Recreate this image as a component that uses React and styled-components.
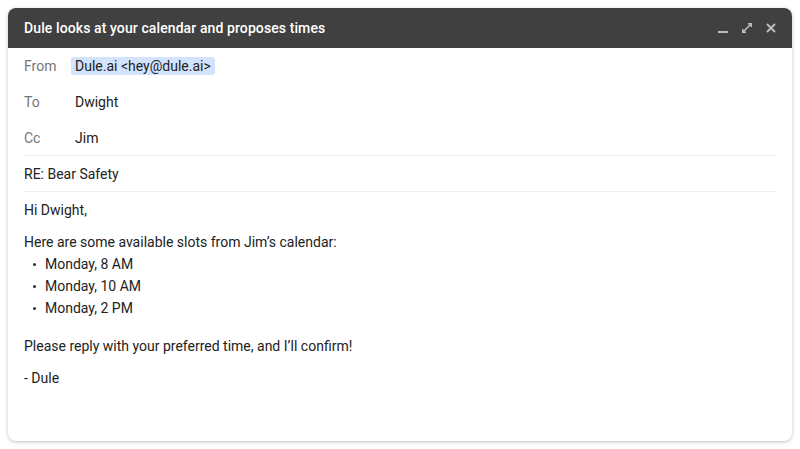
import React from "react";
import styled, { createGlobalStyle } from "styled-components";

const Global = createGlobalStyle`
  html, body { margin: 0; padding: 0; background: #ffffff; }
  body { font-family: Roboto, "Liberation Sans", Arial, sans-serif; }
  * { box-sizing: border-box; }
`;

const Page = styled.div`
  width: 800px;
  height: 449px;
  padding: 8px;
`;

const Card = styled.div`
  height: 433px;
  border-radius: 8px;
  background: #fff;
  box-shadow: 0 1px 3px rgba(0,0,0,0.18), 0 1px 6px rgba(0,0,0,0.08);
  overflow: hidden;
  display: flex;
  flex-direction: column;
`;

const Header = styled.div`
  height: 40px;
  background: #404040;
  display: flex;
  align-items: center;
  justify-content: space-between;
  padding: 0 16px 0 16px;
`;

const Title = styled.div`
  color: #fff;
  font-size: 14px;
  font-weight: 500;
  letter-spacing: 0.1px;
`;

const Controls = styled.div`
  display: flex;
  align-items: center;
  gap: 14px;
`;

const IconBtn = styled.span`
  width: 10px;
  height: 10px;
  display: inline-flex;
  align-items: center;
  justify-content: center;
  color: #bdbdbd;
`;

const Body = styled.div`
  padding: 0 16px;
  display: flex;
  flex-direction: column;
`;

const FieldRow = styled.div`
  height: 36px;
  display: flex;
  align-items: center;
  font-size: 14px;
  border-bottom: ${(p) => (p.$divider ? "1px solid #efefef" : "none")};
`;

const Label = styled.span`
  width: 51px;
  color: #777;
`;

const Value = styled.span`
  color: #222;
  ${(p) =>
    p.$chip &&
    `
    background: #d3e3fd;
    border-radius: 3px;
    padding: 1px 4px;
    margin-left: -4px;
  `}
`;

const Subject = styled.div`
  height: 36px;
  display: flex;
  align-items: center;
  font-size: 14px;
  color: #222;
  border-bottom: 1px solid #efefef;
`;

const Message = styled.div`
  padding-top: 7px;
  font-size: 14px;
  color: #222;
  line-height: 22px;
`;

const Para = styled.p`
  margin: 0 0 ${(p) => p.$gap ?? 10}px 0;
`;

const List = styled.ul`
  margin: 0 0 16px 0;
  padding: 0;
  list-style: none;
`;

const Item = styled.li`
  display: flex;
  align-items: center;
  &::before {
    content: "";
    width: 3px;
    height: 3px;
    border-radius: 50%;
    background: #333;
    margin: 0 9px 0 9px;
    flex: none;
  }
`;

const Minimize = () => (
  <svg width="10" height="10" viewBox="0 0 10 10">
    <rect x="0" y="8" width="10" height="2" fill="currentColor" />
  </svg>
);

const Expand = () => (
  <svg width="10" height="10" viewBox="0 0 10 10" fill="none">
    <path d="M6 0.8h3.2v3.2" stroke="currentColor" strokeWidth="1.6" />
    <path d="M4 9.2H0.8V6" stroke="currentColor" strokeWidth="1.6" />
    <path d="M9 1L1 9" stroke="currentColor" strokeWidth="1.6" />
  </svg>
);

const Close = () => (
  <svg width="10" height="10" viewBox="0 0 10 10" fill="none">
    <path d="M1 1l8 8M9 1l-8 8" stroke="currentColor" strokeWidth="2" />
  </svg>
);

export default function App() {
  return (
    <>
      <Global />
      <Page>
        <Card>
          <Header>
            <Title>Dule looks at your calendar and proposes times</Title>
            <Controls>
              <IconBtn><Minimize /></IconBtn>
              <IconBtn><Expand /></IconBtn>
              <IconBtn><Close /></IconBtn>
            </Controls>
          </Header>
          <Body>
            <FieldRow>
              <Label>From</Label>
              <Value $chip>Dule.ai &lt;hey@dule.ai&gt;</Value>
            </FieldRow>
            <FieldRow>
              <Label>To</Label>
              <Value>Dwight</Value>
            </FieldRow>
            <FieldRow $divider>
              <Label>Cc</Label>
              <Value>Jim</Value>
            </FieldRow>
            <Subject>RE: Bear Safety</Subject>
            <Message>
              <Para>Hi Dwight,</Para>
              <Para $gap={0}>Here are some available slots from Jim’s calendar:</Para>
              <List>
                <Item>Monday, 8 AM</Item>
                <Item>Monday, 10 AM</Item>
                <Item>Monday, 2 PM</Item>
              </List>
              <Para>Please reply with your preferred time, and I’ll confirm!</Para>
              <Para>- Dule</Para>
            </Message>
          </Body>
        </Card>
      </Page>
    </>
  );
}
